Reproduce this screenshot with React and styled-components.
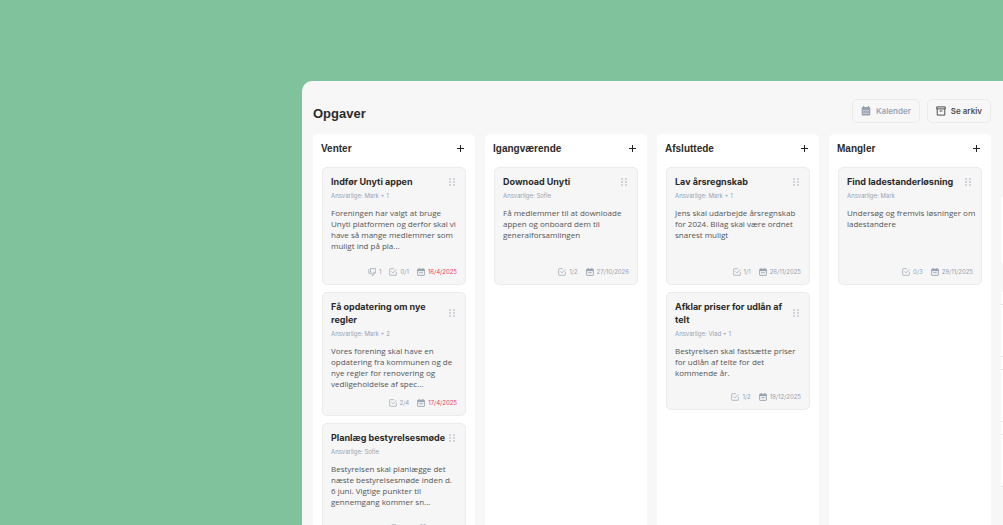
import React from "react";
import styled, { createGlobalStyle } from "styled-components";

const GlobalStyle = createGlobalStyle`
  *, *::before, *::after { box-sizing: border-box; }
  body {
    margin: 0;
    background: #80c29b;
    color: #2b2b2b;
    font-family: Inter, "Liberation Sans", sans-serif;
  }
  h1, h2, h3, p { margin: 0; }
  button { font: inherit; color: inherit; cursor: pointer; }
`;

const Page = styled.div`
  display: flex;
  height: 100vh;
  padding: 81px 0 0 302px;
  overflow: hidden;
`;

const Panel = styled.div`
  display: flex;
  flex: 1;
  min-width: 0;
  gap: 10px;
  padding-left: 11px;
  background: #f7f7f7;
  border-top-left-radius: 10px;
`;

const Main = styled.main`
  display: flex;
  flex: 1;
  flex-direction: column;
  min-width: 0;
`;

const TopBar = styled.header`
  display: flex;
  align-items: center;
  justify-content: space-between;
  padding: 18px 0 11px;
`;

const PageTitle = styled.h1`
  padding-top: 6px;
  font-family: "Liberation Sans", sans-serif;
  font-size: 13px;
  line-height: 18px;
  font-weight: 700;
`;

const Actions = styled.div`
  display: flex;
  gap: 7px;
`;

const ActionButton = styled.button`
  display: flex;
  align-items: center;
  gap: 5px;
  height: 24px;
  padding: 0 8px;
  border: 1px solid #ebebeb;
  border-radius: 5px;
  background: transparent;
  color: ${(p) => (p.$muted ? "#97a3b1" : "#505050")};
  font-size: 8px;
  font-weight: 600;
`;

const Board = styled.div`
  display: grid;
  flex: 1;
  grid-template-columns: repeat(4, minmax(0, 1fr));
  gap: 10px;
`;

const ColumnBox = styled.section`
  padding: 0 9px;
  background: #fff;
  border-radius: 5px 5px 0 0;
`;

const ColumnHeader = styled.div`
  display: flex;
  align-items: center;
  justify-content: space-between;
  height: 33px;
  margin: 0 -1px;
  padding-bottom: 4px;
`;

const ColumnTitle = styled.h2`
  font-family: "Liberation Sans", sans-serif;
  font-size: 10px;
  line-height: 14px;
  font-weight: 700;
`;

const AddButton = styled.button`
  display: flex;
  padding: 2px;
  border: 0;
  background: none;
`;

const CardList = styled.div`
  display: flex;
  flex-direction: column;
  gap: 7px;
`;

const CardBox = styled.article`
  display: flex;
  flex-direction: column;
  min-height: 118px;
  padding: 7px 8px;
  border: 1px solid #ebebeb;
  border-radius: 5px;
  background: #f6f6f6;
`;

const CardHead = styled.div`
  display: flex;
  align-items: center;
  justify-content: space-between;
`;

const CardTitle = styled.h3`
  font-size: 9px;
  line-height: 13px;
  font-weight: 700;
  white-space: pre-line;
`;

const DragButton = styled.button`
  display: flex;
  flex: none;
  padding: 0 2px;
  border: 0;
  background: none;
  color: #97a3b1;
`;

const Owner = styled.p`
  margin-top: 3px;
  color: #97a3b1;
  font-size: 6px;
  line-height: 10px;
`;

const Description = styled.p`
  margin-top: 6px;
  color: #555;
  font-family: "Open Sans", sans-serif;
  font-size: 8px;
  line-height: 11px;
  white-space: pre;
`;

const Meta = styled.div`
  display: flex;
  justify-content: flex-end;
  gap: 8px;
  margin-top: auto;
  padding-top: 9px;
  color: #97a3b1;
  font-size: 6px;
  line-height: 10px;
`;

const MetaItem = styled.span`
  display: flex;
  align-items: center;
  gap: 3px;
`;

const DueDate = styled.time`
  color: ${(p) => (p.$late ? "#ee3c66" : "inherit")};
`;

const SidePanel = styled.aside`
  flex: none;
  width: 2px;
  padding-top: 116px;
  overflow: hidden;
`;

const SideBlock = styled.div`
  height: 65px;
  background: #fff;
`;

const SideList = styled.div`
  display: flex;
  flex-direction: column;
  gap: 12px;
  margin-top: 30px;
  padding-top: 12px;
  background: #fff;
`;

const SideRow = styled.div`
  flex: none;
  height: 53px;
  border: solid #e6e6e6;
  border-width: 1px 0;
`;

function PlusIcon() {
  return (
    <svg width="9" height="9" viewBox="0 0 9 9" fill="none" stroke="#222" strokeWidth="1">
      <path d="M4.500 1v7M1 4.500h7" />
    </svg>
  );
}

function DragIcon() {
  return (
    <svg width="6" height="8" viewBox="0 0 6 8" fill="currentColor">
      {[1, 4, 7].map((y) => (
        <React.Fragment key={y}>
          <circle cx="1" cy={y} r=".75" />
          <circle cx="5" cy={y} r=".75" />
        </React.Fragment>
      ))}
    </svg>
  );
}

function CalendarIcon() {
  return (
    <svg width="10" height="10" viewBox="0 0 10 10" fill="currentColor">
      <path fillRule="evenodd" d="M2 0h1.200v1h3.600V0H8v1h.4c.5 0 .9.4.9.9v6.700c0 .5-.4.9-.9.9H1.600a.9.9 0 0 1-.9-.9V1.900c0-.5.4-.9.900-.9H2zM2.300 4.300v1h1.200v-1zm2.100 0v1h1.200v-1zm2.100 0v1h1.200v-1zM2.300 6.700v1h1.200v-1zm2.100 0v1h1.200v-1zm2.100 0v1h1.200v-1z" />
    </svg>
  );
}

function ArchiveIcon() {
  return (
    <svg width="10" height="10" viewBox="0 0 10 10" fill="none" stroke="currentColor" strokeWidth="1">
      <path d="M.7.9h8.600v2H.7zM1.200 2.900v6.200h7.600V2.900M3.500 5h3" />
    </svg>
  );
}

function NoteIcon() {
  return (
    <svg width="8" height="8" viewBox="0 0 8 8" fill="none" stroke="currentColor" strokeWidth=".7">
      <path d="M2.500 4V.6h4.900v4.200L5 7.300H3.800M5 7.300V4.800h2.400" />
      <path d="M.8.9v4.300h2.600M2.400 4l1.200 1.200-1.200 1.200" />
    </svg>
  );
}

function CheckIcon() {
  return (
    <svg width="8" height="8" viewBox="0 0 8 8" fill="none" stroke="currentColor" strokeWidth=".7">
      <path d="M5 .7H1.200q-.5 0-.5.500v5.600q0 .5.500.5h5.600q.5 0 .5-.5V3.800" />
      <path d="M2.500 3.400 4 4.900 7.400 1.300" />
    </svg>
  );
}

function DateIcon() {
  return (
    <svg width="8" height="8" viewBox="0 0 8 8" fill="none" stroke="currentColor" strokeWidth=".9">
      <rect x=".6" y="1.200" width="6.800" height="6.200" rx=".5" />
      <path d="M.6 2.100h6.800" strokeWidth="2" />
      <path d="M2.200 0v1.500M5.800 0v1.500M2.200 4.700h3.600" />
    </svg>
  );
}

const columns = [
  {
    title: "Venter",
    cards: [
      {
        title: "Indfør Unyti appen",
        owner: "Mark + 1",
        text: "Foreningen har valgt at bruge\nUnyti platformen og derfor skal vi\nhave så mange medlemmer som\nmuligt ind på pla...",
        notes: 1,
        done: "0/1",
        due: "16/4/2025",
        late: true,
      },
      {
        title: "Få opdatering om nye\nregler",
        owner: "Mark + 2",
        text: "Vores forening skal have en\nopdatering fra kommunen og de\nnye regler for renovering og\nvedligeholdelse af spec...",
        done: "2/4",
        due: "17/4/2025",
        late: true,
      },
      {
        title: "Planlæg bestyrelsesmøde",
        owner: "Sofie",
        text: "Bestyrelsen skal planlægge det\nnæste bestyrelsesmøde inden d.\n6 juni. Vigtige punkter til\ngennemgang kommer sn...",
        done: "0/3",
        due: "6/6/2025",
      },
    ],
  },
  {
    title: "Igangværende",
    cards: [
      {
        title: "Downoad Unyti",
        owner: "Sofie",
        text: "Få medlemmer til at downloade\nappen og onboard dem til\ngeneralforsamlingen",
        done: "1/2",
        due: "27/10/2026",
      },
    ],
  },
  {
    title: "Afsluttede",
    cards: [
      {
        title: "Lav årsregnskab",
        owner: "Mark + 1",
        text: "Jens skal udarbejde årsregnskab\nfor 2024. Bilag skal være ordnet\nsnarest muligt",
        done: "1/1",
        due: "26/11/2025",
      },
      {
        title: "Afklar priser for udlån af\ntelt",
        owner: "Vlad + 1",
        text: "Bestyrelsen skal fastsætte priser\nfor udlån af telte for det\nkommende år.",
        done: "1/2",
        due: "19/12/2025",
      },
    ],
  },
  {
    title: "Mangler",
    cards: [
      {
        title: "Find ladestanderløsning",
        owner: "Mark",
        text: "Undersøg og fremvis løsninger om\nladestandere",
        done: "0/3",
        due: "29/11/2025",
      },
    ],
  },
];

function Card({ card }) {
  return (
    <CardBox>
      <CardHead>
        <CardTitle>{card.title}</CardTitle>
        <DragButton type="button" aria-label="Flyt opgave"><DragIcon /></DragButton>
      </CardHead>
      <Owner>Ansvarlige: {card.owner}</Owner>
      <Description>{card.text}</Description>
      <Meta>
        {card.notes && <MetaItem><NoteIcon />{card.notes}</MetaItem>}
        <MetaItem><CheckIcon />{card.done}</MetaItem>
        <MetaItem>
          <DateIcon />
          <DueDate $late={card.late}>{card.due}</DueDate>
        </MetaItem>
      </Meta>
    </CardBox>
  );
}

function Column({ column }) {
  return (
    <ColumnBox>
      <ColumnHeader>
        <ColumnTitle>{column.title}</ColumnTitle>
        <AddButton type="button" aria-label="Tilføj opgave"><PlusIcon /></AddButton>
      </ColumnHeader>
      <CardList>
        {column.cards.map((card) => <Card key={card.title} card={card} />)}
      </CardList>
    </ColumnBox>
  );
}

function App() {
  return (
    <>
      <GlobalStyle />
      <Page>
        <Panel>
          <Main>
            <TopBar>
              <PageTitle>Opgaver</PageTitle>
              <Actions>
                <ActionButton type="button" $muted><CalendarIcon />Kalender</ActionButton>
                <ActionButton type="button"><ArchiveIcon />Se arkiv</ActionButton>
              </Actions>
            </TopBar>
            <Board>
              {columns.map((column) => <Column key={column.title} column={column} />)}
            </Board>
          </Main>
          <SidePanel>
            <SideBlock />
            <SideList>
              <SideRow />
              <SideRow />
              <SideRow />
            </SideList>
          </SidePanel>
        </Panel>
      </Page>
    </>
  );
}

export default App;
